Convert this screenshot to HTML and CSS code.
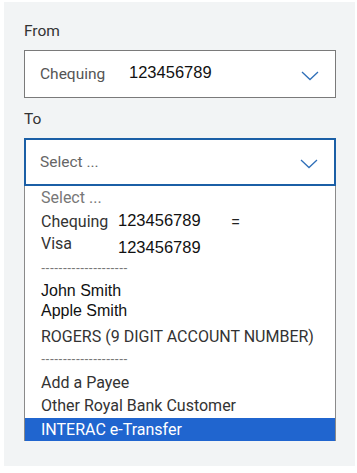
FILE: index.html
```html
<!DOCTYPE html>
<html>
<head>
<meta charset="utf-8">
<link rel="stylesheet" href="styles.css">
</head>
<body>
<div class="panel">
  <div class="label label-from">From</div>
  <div class="select select-from">
    <span class="sel-acct">Chequing</span><span class="sel-num">123456789</span>
    <svg class="chev" width="18" height="10" viewBox="0 0 18 10"><polyline points="1,1 9,8.5 17,1" fill="none" stroke="#2f6fb8" stroke-width="1.3"/></svg>
  </div>
  <div class="label label-to">To</div>
  <div class="select select-to">
    <span class="placeholder">Select ...</span>
    <svg class="chev" width="18" height="10" viewBox="0 0 18 10"><polyline points="1,1 9,8.5 17,1" fill="none" stroke="#2f6fb8" stroke-width="1.3"/></svg>
  </div>
  <div class="list">
    <div class="opt opt-select">Select ...</div>
    <div class="opt opt-cheq"><span class="acct">Chequing</span><span class="num num-up">123456789</span><span class="eq">=</span></div>
    <div class="opt opt-visa"><span class="acct">Visa</span><span class="num num-down">123456789</span></div>
    <div class="sep sep-1">--------------------</div>
    <div class="opt opt-john arial">John Smith</div>
    <div class="opt opt-apple arial">Apple Smith</div>
    <div class="opt opt-rogers">ROGERS (9 DIGIT ACCOUNT NUMBER)</div>
    <div class="sep sep-2">--------------------</div>
    <div class="opt opt-add">Add a Payee</div>
    <div class="opt opt-other">Other Royal Bank Customer</div>
    <div class="opt opt-active">INTERAC e-Transfer</div>
  </div>
</div>
</body>
</html>
```
FILE: styles.css
```css
html, body {
  margin: 0;
  padding: 0;
  background: #ffffff;
}
body {
  font-family: Roboto, "Liberation Sans", Arial, sans-serif;
  font-size: 16px;
  color: #333;
}
.panel {
  margin: 2px 0 0 4px;
  width: 351px;
  height: 464px;
  box-sizing: border-box;
  background: #f2f4f5;
  padding: 20px 19px 0 20px;
}
.label {
  font-size: 15.5px;
  line-height: 18px;
  color: #333;
}
.label-from { margin-bottom: 10px; }
.label-to { margin-top: 12px; margin-bottom: 10px; }
.select {
  height: 48px;
  box-sizing: border-box;
  background: #fff;
  display: flex;
  align-items: center;
  padding: 0 16px 0 15px;
}
.select-from {
  border: 1px solid #7a7a7a;
}
.select-to {
  border: 2px solid #1b5fa6;
  padding-left: 14px;
}
.sel-acct {
  width: 89px;
  font-size: 15.5px;
  color: #555;
}
.sel-num {
  font-family: "Liberation Sans", Arial, sans-serif;
  font-size: 16.5px;
  color: #111;
  margin-top: -3px;
}
.placeholder {
  font-size: 15.5px;
  color: #666;
}
.chev {
  margin-left: auto;
  margin-top: 3px;
  display: block;
}
.list {
  background: #fff;
  border: 1px solid #8a8a8a;
  border-top: none;
  padding-top: 2px;
  height: 255px;
  box-sizing: border-box;
}
.opt {
  line-height: 20px;
  height: 20px;
  padding-left: 16px;
  white-space: nowrap;
  color: #333;
}
.opt-select { color: #777; }
.opt-cheq { margin-top: 2px; }
.opt-visa { margin-top: 4px; }
.acct {
  display: inline-block;
  width: 77px;
}
.num {
  font-family: "Liberation Sans", Arial, sans-serif;
  font-size: 16.5px;
  color: #111;
}
.num-up { vertical-align: 1px; }
.num-down { vertical-align: -4px; }
.eq {
  font-family: "Liberation Sans", Arial, sans-serif;
  font-size: 14px;
  color: #222;
  margin-left: 31px;
}
.sep {
  font-family: "Liberation Sans", Arial, sans-serif;
  font-size: 13px;
  line-height: 12px;
  height: 12px;
  padding-left: 16px;
  color: #777;
  letter-spacing: 0;
}
.sep-1 { margin-top: 8px; }
.sep-2 { margin-top: 6px; }
.arial {
  font-family: "Liberation Sans", Arial, sans-serif;
  font-size: 16px;
  color: #111;
}
.opt-john { margin-top: 7px; }
.opt-apple { margin-top: 0; }
.opt-rogers { margin-top: 6px; }
.opt-add { margin-top: 8px; }
.opt-other { margin-top: 3px; }
.opt-active {
  margin-top: 2px;
  height: 23px;
  line-height: 23px;
  background: #2065cf;
  color: #fff;
}
```
